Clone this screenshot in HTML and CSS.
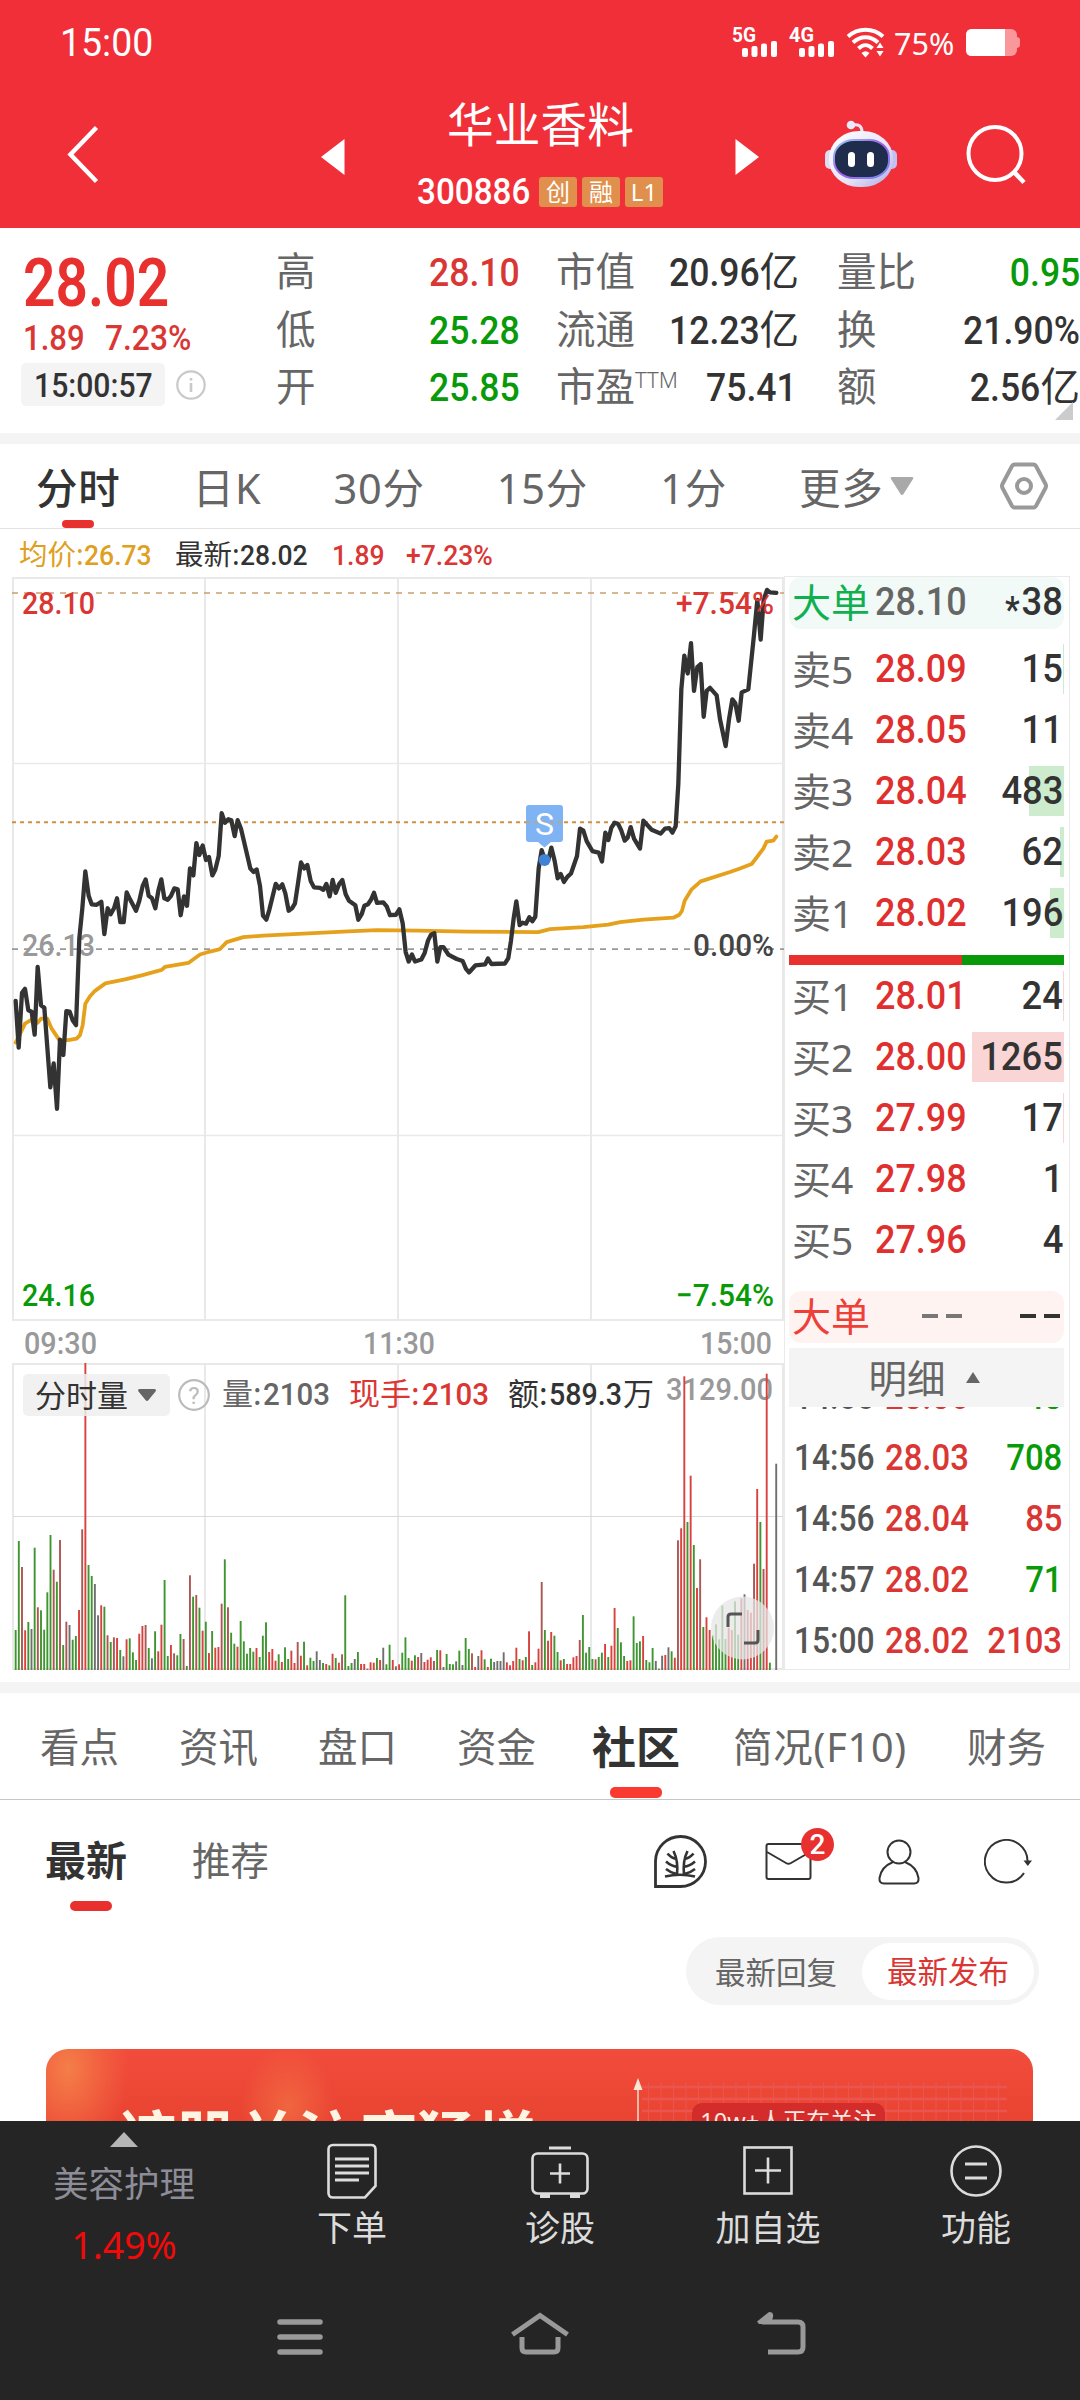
FILE: index.html
```html
<!DOCTYPE html>
<html lang="zh-CN">
<head>
<meta charset="utf-8">
<title>华业香料 300886</title>
<link rel="stylesheet" href="styles.css">
</head>
<body>
<div class="screen">
  <header class="header">
    <div class="status">
      <span class="num clock">15:00</span>
      <div class="status-right">
        <svg width="153" height="34" viewBox="0 0 153 34" fill="#fff">
          <text x="0" y="16" class="net" textLength="24" lengthAdjust="spacingAndGlyphs">5G</text>
          <rect x="10" y="22" width="6" height="9" rx="2"/><rect x="19.500" y="20" width="6" height="11" rx="2"/><rect x="29" y="17.500" width="6" height="13.500" rx="2"/><rect x="39" y="15" width="6" height="16" rx="2"/>
          <text x="57" y="16" class="net" textLength="25" lengthAdjust="spacingAndGlyphs">4G</text>
          <rect x="67" y="22" width="6" height="9" rx="2"/><rect x="76.500" y="20" width="6" height="11" rx="2"/><rect x="86" y="17.500" width="6" height="13.500" rx="2"/><rect x="96" y="15" width="6" height="16" rx="2"/>
          <g fill="none" stroke="#fff" stroke-width="4"><path d="M116 10.500C126 1.500 141 1.500 151 10.500"/><path d="M121 16.500C128.500 9.500 138.500 9.500 146 16.500"/><path d="M126.500 22.500C131 18 136 18 140.500 22.500"/></g>
          <path d="M129.500 27q4-3.500 8 0l-4 4.500z"/><path d="M144.500 22l3.500-5.500 3.500 5.500zM144.500 25h7l-3.500 5.500z"/>
        </svg>
        <span class="battery-text">75%</span>
        <svg width="54" height="28" viewBox="0 0 54 28"><rect x="0" y="0" width="51" height="27" rx="6" fill="#f9979b"/><path d="M50 8q4 0 4 3v5q0 3-4 3z" fill="#f9979b"/><path d="M6 0H39V27H6Q0 27 0 21V6Q0 0 6 0Z" fill="#fff"/></svg>
      </div>
    </div>
    <div class="navbar">
      <svg class="back" width="32" height="60" viewBox="0 0 32 60"><path d="M29.500 2.500L3.500 29.500L29.500 56.500" fill="none" stroke="#fff" stroke-width="4.500"/></svg>
      <div class="title-group">
        <svg width="24" height="38" viewBox="0 0 24 38"><path d="M23.500 1V37L0 19Z" fill="#fff"/></svg>
        <div class="title">
          <h1>华业香料</h1>
          <div class="code"><span class="num">300886</span><i>创</i><i>融</i><i>L1</i></div>
        </div>
        <svg width="24" height="38" viewBox="0 0 24 38"><path d="M0.500 1V37L24 19Z" fill="#fff"/></svg>
      </div>
      <svg class="robot" width="74" height="68" viewBox="0 0 74 68">
        <defs><linearGradient id="shell" x1="0" y1="0" x2="1" y2="1"><stop offset="0" stop-color="#fff"/><stop offset=".6" stop-color="#e6e3f8"/><stop offset="1" stop-color="#a9a6e4"/></linearGradient>
        <linearGradient id="rim" x1="0" y1="0" x2="1" y2="1"><stop offset="0" stop-color="#8fd0f5"/><stop offset=".5" stop-color="#a05be8"/><stop offset="1" stop-color="#7390f0"/></linearGradient></defs>
        <path d="M28 5Q38 3 38 12" fill="none" stroke="#e8e4f6" stroke-width="3"/><circle cx="27" cy="5" r="4.300" fill="#e8ecfa"/>
        <rect x="1" y="30" width="12" height="19" rx="5" fill="#dedcf7"/><rect x="61" y="30" width="12" height="19" rx="5" fill="#c3bff0"/>
        <rect x="5" y="11" width="64" height="56" rx="30" ry="27" fill="url(#shell)"/>
        <rect x="10" y="20" width="55" height="38" rx="20" ry="17" fill="#202c4c" stroke="url(#rim)" stroke-width="2"/>
        <rect x="24" y="32" width="7" height="15" rx="3.500" fill="#fff"/><rect x="43" y="32" width="7" height="15" rx="3.500" fill="#fff"/>
      </svg>
      <svg class="search" width="62" height="62" viewBox="0 0 62 62" fill="none" stroke="#fff" stroke-width="4"><circle cx="30" cy="29.500" r="26.500"/><path d="M49 48L59 58.500" stroke-width="4.500"/></svg>
    </div>
  </header>

  <section class="quote">
    <div class="last">
      <div class="price"><span class="num">28.02</span></div>
      <div class="change"><span class="num">1.89</span><span class="num">7.23%</span></div>
      <div class="time-row"><div class="time"><span class="num">15:00:57</span></div>
        <svg width="30" height="32" viewBox="0 0 30 32"><circle cx="15" cy="16" r="13.700" fill="none" stroke="#c9c9c9" stroke-width="2.200"/><path d="M15 9v2.500M15 14v9" stroke="#c9c9c9" stroke-width="2.600"/></svg>
      </div>
    </div>
    <dl class="stats s1">
      <dt>高</dt><dd class="red"><span class="num">28.10</span></dd>
      <dt>低</dt><dd class="green"><span class="num">25.28</span></dd>
      <dt>开</dt><dd class="green"><span class="num">25.85</span></dd>
    </dl>
    <dl class="stats s2">
      <dt>市值</dt><dd><span class="num">20.96</span>亿</dd>
      <dt>流通</dt><dd><span class="num">12.23</span>亿</dd>
      <dt>市盈<sup>TTM</sup></dt><dd><span class="num">75.41</span></dd>
    </dl>
    <dl class="stats s3">
      <dt>量比</dt><dd class="green"><span class="num">0.95</span></dd>
      <dt>换</dt><dd><span class="num">21.90%</span></dd>
      <dt>额</dt><dd><span class="num">2.56</span>亿</dd>
    </dl>
    <svg class="corner" width="18" height="18" viewBox="0 0 18 18"><path d="M18 0V18H0Z" fill="#ccc"/></svg>
  </section>

  <nav class="periods">
    <span class="active">分时</span><span>日K</span><span>30分</span><span>15分</span><span>1分</span>
    <span class="more">更多<svg width="24" height="20" viewBox="0 0 24 20"><path d="M2 1H22Q24 1 23 3L13.500 18Q12 20 10.500 18L1 3Q0 1 2 1Z" fill="#a9a9a9"/></svg></span>
    <svg class="gear" width="50" height="50" viewBox="0 0 50 50" fill="none" stroke="#999" stroke-width="4"><path d="M15.500 3.500H34.500Q36 3.500 37 5L46.500 23Q47.500 25 46.500 27L37 45Q36 46.500 34.500 46.500H15.500Q14 46.500 13 45L3.500 27Q2.500 25 3.500 23L13 5Q14 3.500 15.500 3.500Z"/><circle cx="25" cy="25" r="7"/></svg>
  </nav>

  <div class="market">
    <div class="chart-col">
      <div class="info">
        <span class="gold">均价:<b class="num">26.73</b></span><span class="dark">最新:<b class="num">28.02</b></span><span class="red"><b class="num">1.89</b></span><span class="red"><b class="num">+7.23%</b></span>
      </div>
      <svg class="chart" width="784" height="1093" viewBox="0 577 784 1093">
        <g stroke="#e9e9e9" stroke-width="2" fill="none">
          <path d="M13 578H783V1320H13ZM205 578V1320M398 578V1320M591 578V1320" />
          <path d="M13 763.500H783M13 1135.500H783" stroke-width="1.500"/>
          <path d="M13 1364H783V1669H13ZM205 1364V1669M398 1364V1669M591 1364V1669"/>
          <path d="M13 1516.500H783" stroke="#d9d9d9" stroke-width="1"/>
        </g>
        <g stroke-width="2" fill="none">
          <path d="M12 593H784" stroke="#c9a06b" stroke-dasharray="6 6" stroke-width="1.700"/>
          <path d="M12 822.300H784" stroke="#cf9141" stroke-dasharray="4 4"/>
          <path d="M12 949.200H784" stroke="#999" stroke-dasharray="6 6" stroke-width="1.700"/>
        </g>
        <text class="lab" x="22" y="955.500" textLength="73" lengthAdjust="spacingAndGlyphs" fill="#999">26.13</text>
        <g class="lines">
          <path id="average" transform="translate(0 570) scale(.333333 .49745)" stroke="#e5a11b" stroke-width="3.800"/>
          <path id="price" transform="translate(0 570) scale(.333333 .49745)" stroke="#333" stroke-width="4.300"/>
        </g>
        <ellipse cx="544.500" cy="860" rx="6" ry="6" fill="#3f82d6"/>
        <path d="M529 805H560Q563 805 563 808V839Q563 842 560 842H551L544.500 847.500L538 842H529Q526 842 526 839V808Q526 805 529 805Z" fill="#7fb3f3"/>
        <path d="M526 822.300H563" stroke="#b9a58c" stroke-width="2" stroke-dasharray="4 4"/>
        <text class="marker" x="544.500" y="834.500" text-anchor="middle">S</text>
        <text class="lab" x="22" y="614" textLength="73" lengthAdjust="spacingAndGlyphs" fill="#d93634">28.10</text>
        <text class="lab" x="22" y="1305.500" textLength="73" lengthAdjust="spacingAndGlyphs" fill="#099a09">24.16</text>
        <text class="lab" x="676" y="614" textLength="98" lengthAdjust="spacingAndGlyphs" fill="#d93634">+7.54%</text>
        <text class="lab" x="693" y="955.500" textLength="81" lengthAdjust="spacingAndGlyphs" fill="#444">0.00%</text>
        <text class="lab" x="676" y="1305.500" textLength="98" lengthAdjust="spacingAndGlyphs" fill="#099a09">−7.54%</text>
        <g fill="#999">
          <text class="lab" x="24" y="1354" textLength="73" lengthAdjust="spacingAndGlyphs">09:30</text>
          <text class="lab" x="363" y="1354" textLength="72" lengthAdjust="spacingAndGlyphs">11:30</text>
          <text class="lab" x="700" y="1354" textLength="72" lengthAdjust="spacingAndGlyphs">15:00</text>
          <text class="lab" x="666" y="1400" textLength="107" lengthAdjust="spacingAndGlyphs">3129.00</text>
        </g>
        <g id="volume"></g>
        <rect x="23" y="1374" width="147" height="42" rx="5" fill="#efefef" fill-opacity=".85"/>
        <text class="cjk" x="35" y="1406.500" fill="#333">分时量</text>
        <path d="M140 1389H154Q157 1389 155.500 1391.500L148.500 1400Q147 1402 145.500 1400L138.500 1391.500Q137 1389 140 1389Z" fill="#666"/>
        <circle cx="194" cy="1395" r="14.800" fill="none" stroke="#bbb" stroke-width="2.200"/>
        <text class="help" x="194" y="1403.500" text-anchor="middle">?</text>
        <g fill="#666"><text class="cjk" x="222" y="1404.500">量:</text><text class="lab" x="263" y="1404.500" textLength="67" lengthAdjust="spacingAndGlyphs">2103</text></g>
        <g fill="#d93634"><text class="cjk" x="349" y="1404.500">现手:</text><text class="lab" x="422" y="1404.500" textLength="67" lengthAdjust="spacingAndGlyphs">2103</text></g>
        <g fill="#333"><text class="cjk" x="508" y="1404.500">额:</text><text class="lab" x="549" y="1404.500" textLength="73" lengthAdjust="spacingAndGlyphs">589.3</text><text class="cjk" x="623" y="1404.500">万</text></g>
        <circle cx="742.500" cy="1628" r="31.500" fill="#e6e6e6" fill-opacity=".75"/>
        <path d="M728 1627V1617Q728 1614 731 1614H742M744 1643H755Q758 1643 758 1640V1630" fill="none" stroke="#555" stroke-width="3"/>
      </svg>
    </div>
    <aside class="book">
      <div class="row big sell"><span>大单</span><b class="num">28.10</b><em class="num"><small>*</small>38</em></div>
      <div class="group asks">
        <div class="row" style="--w:1px"><span>卖5</span><b class="num">28.09</b><em class="num">15</em></div>
        <div class="row" style="--w:0px"><span>卖4</span><b class="num">28.05</b><em class="num">11</em></div>
        <div class="row" style="--w:35px"><span>卖3</span><b class="num">28.04</b><em class="num">483</em></div>
        <div class="row" style="--w:4px"><span>卖2</span><b class="num">28.03</b><em class="num">62</em></div>
        <div class="row" style="--w:14px"><span>卖1</span><b class="num">28.02</b><em class="num">196</em></div>
      </div>
      <div class="ratio"></div>
      <div class="group bids">
        <div class="row" style="--w:1px"><span>买1</span><b class="num">28.01</b><em class="num">24</em></div>
        <div class="row" style="--w:92px"><span>买2</span><b class="num">28.00</b><em class="num">1265</em></div>
        <div class="row" style="--w:1px"><span>买3</span><b class="num">27.99</b><em class="num">17</em></div>
        <div class="row" style="--w:0px"><span>买4</span><b class="num">27.98</b><em class="num">1</em></div>
        <div class="row" style="--w:0px"><span>买5</span><b class="num">27.96</b><em class="num">4</em></div>
      </div>
      <div class="row big buy"><span>大单</span><div class="dash"><i></i><i></i></div><div class="dash dark"><i></i><i></i></div></div>
      <div class="detail-head">明细<svg width="14" height="11" viewBox="0 0 14 11"><path d="M7 0L14 11H0Z" fill="#666"/></svg></div>
      <div class="ticks">
        <div><span class="num">14:55</span><b class="num">28.06</b><em class="num green">48</em></div>
        <div><span class="num">14:56</span><b class="num">28.03</b><em class="num green">708</em></div>
        <div><span class="num">14:56</span><b class="num">28.04</b><em class="num">85</em></div>
        <div><span class="num">14:57</span><b class="num">28.02</b><em class="num green">71</em></div>
        <div><span class="num">15:00</span><b class="num">28.02</b><em class="num">2103</em></div>
      </div>
    </aside>
  </div>

  <nav class="sections">
    <span>看点</span><span>资讯</span><span>盘口</span><span>资金</span><span class="active">社区</span><span class="wide">简况(F10)</span><span>财务</span>
  </nav>
  <div class="feed-head">
    <span class="active">最新</span><span>推荐</span>
    <div class="icons">
      <svg width="54" height="54" viewBox="0 0 54 54" fill="none" stroke="#333" stroke-width="2.800"><path d="M1.500 51.500V26A25 25 0 1 1 26.500 51.500Z"/><path d="M11 41.500Q26 38 41 41.500M23 40Q24.500 26 19.500 16M30 40Q28.500 26 33.500 16M22.500 24Q17 23 13.500 18.500M23.500 32Q17 31 12 26.500M22.500 39Q17 38 12 34M30.500 24Q36 23 39.500 18.500M29.500 32Q36 31 41 26.500M30.500 39Q36 38 41 34" stroke-width="2.600"/></svg>
      <div class="mail"><svg width="48" height="40" viewBox="0 0 48 40" fill="none" stroke="#333" stroke-width="2"><rect x="1.500" y="2" width="44" height="35" rx="2"/><path d="M2 10L21 21Q23.500 22.500 26 21L45 10"/></svg><i class="badge">2</i></div>
      <svg width="42" height="46" viewBox="0 0 42 46" fill="none" stroke="#333" stroke-width="2"><ellipse cx="21" cy="13" rx="11.500" ry="11.500"/><path d="M15 23Q3 28 1.500 39Q1 44.500 6 44.500H36Q41 44.500 40.500 39Q39 28 27 23"/></svg>
      <svg width="48" height="46" viewBox="0 0 48 46" fill="none" stroke="#333" stroke-width="2"><path d="M43.500 23A21.300 21.300 0 1 0 40 34"/><path d="M39.500 21.500H48L43.800 27Z" fill="#333" stroke="none"/></svg>
    </div>
  </div>
  <div class="sort"><div class="pill"><span>最新回复</span><span class="on">最新发布</span></div></div>
  <div class="banner">
    <strong>该股关注度猛增</strong>
    <div class="banner-art">
      <svg width="380" height="72" viewBox="0 0 380 72"><path d="M12 5H377M12 17H377M12 29H377M12 41H377M12 53H377" stroke="#ea5550" stroke-width="2.500"/><path d="M18.500 0V72M31 0V72M43.500 0V72M56 0V72M68.500 0V72M81 0V72M93.500 0V72M106 0V72M118.500 0V72M131 0V72M143.500 0V72M156 0V72M168.500 0V72M181 0V72M193.500 0V72M206 0V72M218.500 0V72M231 0V72M243.500 0V72M256 0V72M268.500 0V72M281 0V72M293.500 0V72M306 0V72M318.500 0V72M331 0V72M343.500 0V72M356 0V72M368.500 0V72" stroke="#eb5550" stroke-width="1"/><path d="M8 8V72" stroke="#f7b9a5" stroke-width="2"/><path d="M8 -4L12.500 8H3.500Z" fill="#fde6d6"/></svg>
      <span class="chip">10w+人正在关注</span>
    </div>
  </div>

  <footer class="dock">
    <div class="actions">
      <div class="sector"><svg width="28" height="15" viewBox="0 0 28 15"><path d="M14 0L28 15H0Z" fill="#b5b5b5"/></svg><span>美容护理</span><b>1.49%</b></div>
      <div class="act"><svg width="56" height="58" viewBox="0 0 56 58" fill="none" stroke="#dcdcdc" stroke-width="2.600"><path d="M9 2H47Q51.500 2 51.500 6.500V43L41 54.500H9Q4.500 54.500 4.500 50V6.500Q4.500 2 9 2Z"/><path d="M11 16H45M11 23H45M11 30H45M11 37H35" stroke-width="3"/></svg><span>下单</span></div>
      <div class="act"><svg width="60" height="58" viewBox="0 0 60 58" fill="none" stroke="#dcdcdc" stroke-width="2.600"><rect x="2.500" y="10.500" width="55" height="40" rx="5"/><path d="M19 5H41" stroke-width="3"/><path d="M20 30.500H40M30 20.500V40.500"/><path d="M10 53H20M40 53H50" stroke-width="4"/></svg><span>诊股</span></div>
      <div class="act"><svg width="56" height="58" viewBox="0 0 56 58" fill="none" stroke="#dcdcdc" stroke-width="2.600"><rect x="4.500" y="4.500" width="47" height="46"/><path d="M15 27.500H41M28 14.500V40.500"/></svg><span>加自选</span></div>
      <div class="act"><svg width="56" height="58" viewBox="0 0 56 58" fill="none" stroke="#dcdcdc" stroke-width="2.600"><circle cx="28" cy="28" r="24.500"/><path d="M17 21H39M17 35H39" stroke-width="3"/></svg><span>功能</span></div>
    </div>
    <div class="system">
      <svg width="46" height="44" viewBox="0 0 46 44" stroke="#999" stroke-width="5.500" stroke-linecap="round"><path d="M3 10H43M3 25H43M3 40H43"/></svg>
      <svg width="58" height="44" viewBox="0 0 58 44" fill="none" stroke="#999" stroke-width="5"><path d="M1.500 22.500L29 3.500L56.500 22.500"/><path d="M11 25V36Q11 40 15 40H43Q47 40 47 36V25"/></svg>
      <svg width="50" height="44" viewBox="0 0 50 44" fill="none" stroke="#999" stroke-width="5"><path d="M5 10H41Q46 10 46 15V35Q46 40 41 40H11"/><path d="M0 9.500L12 0Q17 0 16 5L14 12H2Z" fill="#999" stroke="none"/></svg>
    </div>
  </footer>
</div>
<script src="chart.js"></script>
</body>
</html>
```
FILE: styles.css
```css
* { box-sizing: border-box; margin: 0; padding: 0; }
body { background: #fff; font-family: "Noto Sans", "Noto Sans CJK SC", sans-serif; color: #333; }
i, em { font-style: normal; }
b, h1 { font-weight: 400; }
svg { display: block; flex: none; }
.screen { width: 1080px; height: 2400px; overflow: hidden; display: flex; flex-direction: column; background: #fff; }
.screen > * { flex: none; }
.num { display: inline-block; font-family: Roboto, sans-serif; font-weight: 500; transform: scaleX(.9); transform-origin: right center; white-space: nowrap; }
.red { color: #d93634; }
.green { color: #099a09; }
.gold { color: #dfa01f; }
.dark { color: #333; }

/* header */
.header { height: 228px; background: #f12f38; color: #fff; }
.status { height: 84px; padding: 0 60px; display: flex; align-items: center; justify-content: space-between; }
.clock { font-size: 39px; font-weight: 400; transform: scaleX(.96); transform-origin: left; margin-top: 2px; }
.status-right { display: flex; align-items: center; margin-top: 2px; }
.status-right svg { overflow: visible; }
.net { font: 700 21px Roboto, sans-serif; }
.battery-text { width: 72px; margin: 0 0 0 9px; font: 400 30.500px/36px "Noto Sans", sans-serif; }
.navbar { height: 144px; display: flex; align-items: flex-start; }
.back { margin: 41px 0 0 67px; }
.title-group { display: flex; width: 438px; margin-left: 222px; justify-content: space-between; }
.title-group > svg { margin-top: 54px; }
.title { text-align: center; padding-left: 1px; }
.title h1 { font-size: 46.700px; line-height: 56px; margin-top: 12px; }
.code { display: flex; align-items: center; gap: 5px; height: 30px; margin-top: 25px; }
.title .code .num { font-size: 36.500px; width: 123px; margin-left: -12px; line-height: 30px; margin-right: 5px; transform: scaleX(.91); }
.code i { background: #e0904c; border-radius: 3px; height: 30px; width: 38px; font-size: 24px; line-height: 29px; }
.robot { margin: 36px 0 0 65px; }
.search { margin: 40px 0 0 67px; }

/* quote summary */
.quote { height: 216px; border-bottom: 11px solid #f4f4f4; display: flex; position: relative; }
.last { width: 276px; padding-left: 21px; }
.last .num { transform-origin: left center; }
.price { font-size: 67px; line-height: 70px; margin-top: 17px; height: 70px; color: #e8302f; padding-left: 2px; }
.price .num { transform: scaleX(.85); font-weight: 600; }
.change { display: flex; font-size: 34.500px; line-height: 40px; color: #d93634; padding-left: 2px; margin-top: 3px; }
.change .num:first-child { width: 82px; }
.change .num:last-child { transform: scaleX(.92); }
.time-row { display: flex; align-items: center; gap: 11px; margin-top: 5px; }
.time { width: 144px; height: 43px; background: #f4f4f4; border-radius: 5px; font-size: 33.500px; line-height: 42px; padding-left: 13px; white-space: nowrap; }
.stats { display: grid; grid-template-columns: 79px 1fr; grid-auto-rows: 57.500px; align-content: start; padding-top: 15px; font-size: 39.500px; line-height: 57px; white-space: nowrap; }
.stats dt { color: #666; }
.stats dd { text-align: right; }
.s1 { width: 244px; }
.s2 { width: 243px; margin-left: 36px; }
.s2 dd:last-child { padding-right: 2px; }
.s3 { width: 243px; margin-left: 38px; }
.stats sup { font-size: 22px; vertical-align: 13px; line-height: 0; font-weight: 300; }
.corner { position: absolute; right: 7px; bottom: 13px; }

/* period tabs */
.periods { height: 85px; display: flex; align-items: center; gap: 72px; padding-left: 36px; font-size: 41.500px; letter-spacing: .8px; color: #666; border-bottom: 1px solid #e3e3e3; white-space: nowrap; }
.periods .active { color: #333; font-weight: 500; position: relative; }
.periods .active::after { content: ""; position: absolute; left: 26px; bottom: -12px; width: 32px; height: 8px; border-radius: 4px; background: #e8302f; }
.more { display: flex; align-items: center; gap: 6px; }
.gear { margin-left: 13px; }

/* chart and order book */
.market { display: flex; height: 1141px; }
.chart-col { width: 784px; }
.info { display: flex; height: 48px; padding: 4px 0 0 19px; align-items: center; font-size: 28.500px; line-height: 40px; white-space: nowrap; }
.info .num { transform: scaleX(.93); transform-origin: left center; }
.info span { display: block; }
.info span:nth-child(1) { width: 156px; }
.info span:nth-child(2) { width: 157px; }
.info span:nth-child(3) { width: 74px; }
.lines path { fill: none; stroke-linejoin: round; stroke-linecap: round; vector-effect: non-scaling-stroke; }
.lab { font: 500 31.500px Roboto, sans-serif; }
.cjk { font: 400 31px "Noto Sans CJK SC", sans-serif; }
.marker { font: 400 32px Roboto, sans-serif; fill: #fff; }
.help { font: 400 24px Roboto, sans-serif; fill: #bbb; }
.book { width: 286px; height: 1094px; margin-top: 47px; border: 1px solid #eaeaea; padding: 0 5px 0 4px; overflow: hidden; }
.row { display: grid; grid-template-columns: 83px minmax(0, 1fr) auto; align-items: center; height: 50px; padding: 0 1px 0 3px; font-size: 38.500px; line-height: 50px; white-space: nowrap; color: #666; }
.row b { color: #e02f2f; transform: scaleX(.91); transform-origin: left center; font-size: 39.500px; }
.row em { color: #333; transform: scaleX(.92); font-size: 39.500px; }
.row span { font-size: 39px; }
.group { display: grid; grid-template-columns: 100%; gap: 11px; }
.group .row { background: linear-gradient(var(--tint), var(--tint)) right / var(--w) 100% no-repeat; }
.asks { --tint: #cdebcd; margin-top: 15px; }
.bids { --tint: #fad5d5; margin-top: 6px; }
.ratio { height: 10px; margin-top: 17px; background: linear-gradient(90deg, #e8302f 173px, #099a09 173px); }
.big { height: 52px; border-radius: 12px; }
.sell { background: #f1faf6; color: #10b050; padding-bottom: 3px; }
.sell span { color: #10b050; }
.sell b { color: #666; }
.sell small { font-size: 36px; vertical-align: -7px; margin-right: 2px; line-height: 0; }
.buy { background: #fff3f2; color: #ee4038; margin-top: 26px; padding-bottom: 2px; }
.dash { display: flex; gap: 8px; margin: 0 0 0 47px; }
.dash.dark { margin-right: 3px; margin-left: 0; }
.dash i { width: 16px; height: 4px; background: #777; }
.dash.dark i { background: #333; }
.detail-head { height: 59px; margin-top: 5px; background: #f4f4f4; display: flex; align-items: center; justify-content: center; gap: 20px; font-size: 38.500px; color: #666; padding-right: 5px; line-height: 58px; }
.ticks { height: 262px; overflow: hidden; display: flex; flex-direction: column; justify-content: flex-end; }
.ticks div { flex: none; height: 61px; display: grid; grid-template-columns: 91px 1fr auto; align-items: center; padding: 0 2px 0 5px; font-size: 36.500px; white-space: nowrap; }
.ticks div:last-child { margin-bottom: -2px; }
.ticks span { color: #555; transform: scaleX(.87); transform-origin: left center; }
.ticks b { color: #d93634; transform: scaleX(.9); transform-origin: left center; }
.ticks em { color: #d93634; }
.ticks em.green { color: #099a09; }

/* community */
.sections { height: 118px; border-top: 11px solid #f4f4f4; border-bottom: 1px solid #c6c6c6; display: flex; align-items: center; gap: 60px; padding: 0 0 2px 40px; font-size: 39.500px; color: #666; white-space: nowrap; margin-top: 12px; }
.sections .active { font-size: 44px; margin: 0 -7px 0 -4px; font-weight: 700; color: #333; position: relative; }
.sections .active::after { content: ""; position: absolute; left: 18px; bottom: -21px; width: 52px; height: 11px; border-radius: 5px; background: #fa3a31; }
.sections .wide { letter-spacing: .8px; }
.feed-head { height: 124px; display: flex; align-items: center; padding: 0 48px 0 45px; font-size: 38.500px; color: #666; }
.feed-head > span { margin-top: -8px; }
.feed-head > span + span { margin-left: 65px; }
.feed-head .active { font-size: 41px; font-weight: 700; color: #333; position: relative; }
.feed-head .active::after { content: ""; position: absolute; left: 25px; bottom: -23px; width: 42px; height: 10px; border-radius: 5px; background: #e8302f; }
.icons { margin-left: auto; display: flex; align-items: center; }
.icons > svg:nth-child(3) { margin: 0 64px 0 65px; }
.mail { position: relative; margin-left: 57px; }
.badge { position: absolute; left: 36px; top: -14px; width: 33px; height: 33px; border-radius: 50%; background: #e8302f; color: #fff; font: 500 28px/33px Roboto, sans-serif; text-align: center; }
.sort { height: 125px; display: flex; justify-content: flex-end; align-items: flex-start; padding: 13px 41px 0 0; }
.pill { height: 68px; width: 353px; border-radius: 34px; background: #f4f4f4; display: flex; align-items: center; padding: 0 5px 0 29px; font-size: 30.500px; color: #666; justify-content: space-between; }
.pill .on { height: 57px; width: 172px; line-height: 56px; border-radius: 29px; background: #fff; color: #d93634; text-align: center; }
.banner { height: 72px; margin: 0 47px 0 46px; border-radius: 22px 22px 0 0; overflow: hidden; display: flex; background: radial-gradient(ellipse 60px 90px at 22px 20px, #f47e48 0, #f36e4480 60%, transparent 100%), radial-gradient(ellipse 46px 60px at 242px 58px, #f47e4890, transparent), linear-gradient(#f24d3c, #e94432); }
.banner strong { width: 540px; padding-left: 71px; font: 700 60px/72px "Noto Sans CJK SC", sans-serif; color: #fff3e2; padding-top: 50px; white-space: nowrap; }
.banner-art { position: relative; padding: 33px 0 0 44px; }
.banner-art svg { overflow: visible; }
.chip { position: absolute; left: 106px; top: 54px; width: 193px; height: 40px; border-radius: 10px; background: #d42c2b; color: #fde8e0; font-size: 23.500px; line-height: 36px; text-align: center; white-space: nowrap; }

/* bottom */
.dock { height: 279px; background: #252525; }
.actions { height: 160px; display: grid; grid-template-columns: 248px repeat(4, 208px); }
.sector { display: flex; flex-direction: column; align-items: center; padding-top: 11px; font-size: 35.500px; line-height: 44px; color: #8d8d98; }
.sector span { margin-top: 14px; }
.sector b { color: #f00a0a; font-size: 37.500px; margin-top: 18px; }
.act { display: flex; flex-direction: column; align-items: center; padding-top: 22px; font-size: 35px; line-height: 44px; color: #dcdcdc; }
.act span { margin-top: 5px; }
.system { display: flex; justify-content: space-between; width: 530px; margin-left: 277px; padding-top: 31px; }
```
FILE: chart.js
```javascript
// Points are stored on a grid of 3 units per px across and 2.01 units per px down.
const PRICE = "47,866 56,960 66,850 75,842 85,885 95,888 104,934 113,798 123,875 133,880 142,960 151,1040 161,992 171,1083 180,944 190,975 199,887 209,888 218,905 228,915 238,740 247,680 256,606 266,655 275,672 290,673 304,667 313,732 323,680 332,692 342,680 351,660 361,708 371,708 380,648 390,662 408,685 418,665 428,635 437,622 446,655 456,660 466,680 475,645 484,622 493,660 503,663 513,655 523,640 533,642 542,694 552,656 561,675 570,600 580,614 589,549 598,573 608,554 618,583 627,577 637,614 646,602 656,575 665,489 675,508 685,501 694,503 704,535 713,503 723,520 751,600 761,607 770,602 780,635 789,695 799,703 808,683 827,631 837,640 847,632 856,650 866,685 876,680 885,670 894,630 903,588 913,600 922,593 932,625 942,638 960,639 970,643 979,631 989,656 998,623 1007,649 1017,632 1027,623 1037,652 1047,665 1066,674 1075,703 1085,692 1093,675 1104,672 1113,663 1122,649 1131,669 1150,668 1160,676 1170,694 1188,693 1198,682 1208,710 1217,768 1226,787 1236,773 1245,787 1264,783 1274,770 1284,745 1293,733 1303,730 1312,787 1321,758 1330,758 1345,773 1370,782 1388,786 1398,802 1407,809 1426,795 1455,793 1464,781 1474,792 1515,791 1525,780 1533,745 1541,700 1549,666 1559,714 1568,709 1578,711 1588,698 1597,706 1606,697 1616,600 1625,563 1635,583 1645,583 1654,558 1664,585 1673,620 1682,611 1692,627 1702,617 1713,610 1731,575 1740,520 1750,524 1760,545 1777,565 1796,568 1806,586 1816,528 1825,543 1834,518 1844,508 1854,510 1863,522 1874,544 1883,538 1892,517 1902,540 1920,560 1930,504 1955,522 1982,530 1995,520 2008,519 2017,528 2027,515 2035,430 2044,240 2053,172 2063,208 2073,147 2082,243 2092,195 2102,189 2111,295 2120,243 2130,237 2150,252 2160,300 2177,354 2187,300 2197,260 2206,268 2216,303 2225,246 2245,240 2262,130 2272,60 2282,140 2291,60 2301,40 2310,45 2329,46";
const AVERAGE = "47,950 62,930 75,912 95,904 113,910 123,902 142,902 155,922 178,945 205,945 230,942 240,935 248,915 256,872 270,857 285,846 316,831 375,823 425,815 485,804 495,798 565,790 600,773 630,767 660,762 680,748 730,738 790,735 910,731 1030,727 1130,724 1255,725 1400,727 1615,728 1650,722 1750,718 1825,713 1860,708 1930,703 2020,699 2038,693 2046,685 2054,665 2075,642 2102,626 2190,607 2220,600 2255,591 2270,578 2290,560 2300,546 2320,544 2329,536";

// One bar a minute: top edge, then r (up), g (down), k (flat), d (dark red).
const VOLUME = "870g 603g 681d 871r 846g 867k 623g 802d 811g 869g 757g 585g 689d 725g 600d 915g 845d 855k 899g 888g 810r 568d 69r 675g 708g 732k 826k 796r 800g 886d 906g 892d 894r 930g 949k 898r 895g 937g 960g 881r 858r 855d 924g 955k 874g 934r 854r 720g 948g 915r 940d 946g 882g 897d 978g 706d 770g 765d 803g 872r 845g 939r 873g 923r 921r 791d 658g 802d 878g 911g 920r 843g 904g 941g 924g 935g 924r 951g 887g 847g 936r 927r 962r 943g 966r 922g 957g 932r 969r 906d 947r 905g 976r 953g 963g 934k 960k 969g 972r 976g 941r 954g 968r 943d 766g 978g 969g 957k 936g 972r 972r 986k 967r 968r 954g 960r 923k 973g 914g 960r 979k 973r 938g 892g 954g 962r 946g 951r 939k 966r 959r 952r 963d 930g 931r 981k 942g 972g 973g 964k 932g 975k 894g 927g 940d 981r 948k 931r 958g 981r 956g 966k 963k 963k 937k 967r 976r 963r 923r 957g 961r 951g 874r 975g 967r 926r 726d 870g 902r 876r 887g 936g 961r 957g 972r 972r 952r 948r 900d 825g 938g 921g 957g 958d 951g 938g 912r 951g 917r 804r 864g 907g 948g 963r 961r 829g 909g 904g 888r 960g 967g 924g 963k 986g 947k 945r 922k 934g 953r 601d 565r 109r 546g 407r 615g 744r 658d 861g 832r 870r 886g 853g 898g 796g 897g 863r 870r 784g 884g 775r 763k 810r 818r 671d 447r 546g 687d 101r 968g 990g 371k";
const COLORS = { r: "#d8413d", g: "#3f9630", k: "#6f6f6f", d: "#ad5652" };

document.getElementById("price").setAttribute("d", "M" + PRICE.replace(/ /g, "L"));
document.getElementById("average").setAttribute("d", "M" + AVERAGE.replace(/ /g, "L"));

const group = document.getElementById("volume");
VOLUME.split(" ").forEach((item, i) => {
  const top = parseInt(item, 10);
  const bar = document.createElementNS("http://www.w3.org/2000/svg", "rect");
  bar.setAttribute("x", (14.7 + i * 3.169).toFixed(2));
  bar.setAttribute("y", (1340 + top / 3).toFixed(1));
  bar.setAttribute("width", 1.9);
  bar.setAttribute("height", ((990 - top) / 3).toFixed(1));
  bar.setAttribute("fill", COLORS[item.slice(-1)]);
  group.appendChild(bar);
});
```
